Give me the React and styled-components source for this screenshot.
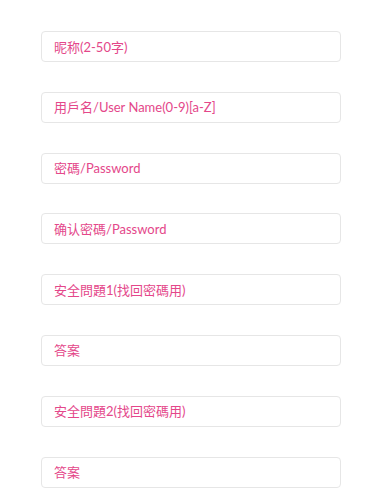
import React from "react";
import styled, { createGlobalStyle } from "styled-components";

const Global = createGlobalStyle`
  html, body { margin: 0; padding: 0; background: #fff; }
  body { font-family: "Lato", "Noto Sans CJK SC", sans-serif; }
`;

const Form = styled.form`
  display: flex;
  flex-direction: column;
  gap: 29.8px;
  padding: 31px 0 0 41px;
  width: 300px;
`;

const Field = styled.input`
  box-sizing: border-box;
  width: 300px;
  height: 31px;
  border: 1px solid #e6e6e6;
  border-radius: 4px;
  padding: 0 12px;
  font-family: "Lato", "Noto Sans CJK SC", sans-serif;
  font-size: 13px;
  color: #e4478a;
  background: #fff;
  outline: none;
  &::placeholder { color: #e4478a; opacity: 1; }
`;

const fields = [
  "昵称(2-50字)",
  "用戶名/User Name(0-9)[a-Z]",
  "密碼/Password",
  "确认密碼/Password",
  "安全問題1(找回密碼用)",
  "答案",
  "安全問題2(找回密碼用)",
  "答案",
];

export default function App() {
  return (
    <>
      <Global />
      <Form>
        {fields.map((f, i) => (
          <Field key={i} placeholder={f} type={f.includes("Password") ? "password" : "text"} />
        ))}
      </Form>
    </>
  );
}
